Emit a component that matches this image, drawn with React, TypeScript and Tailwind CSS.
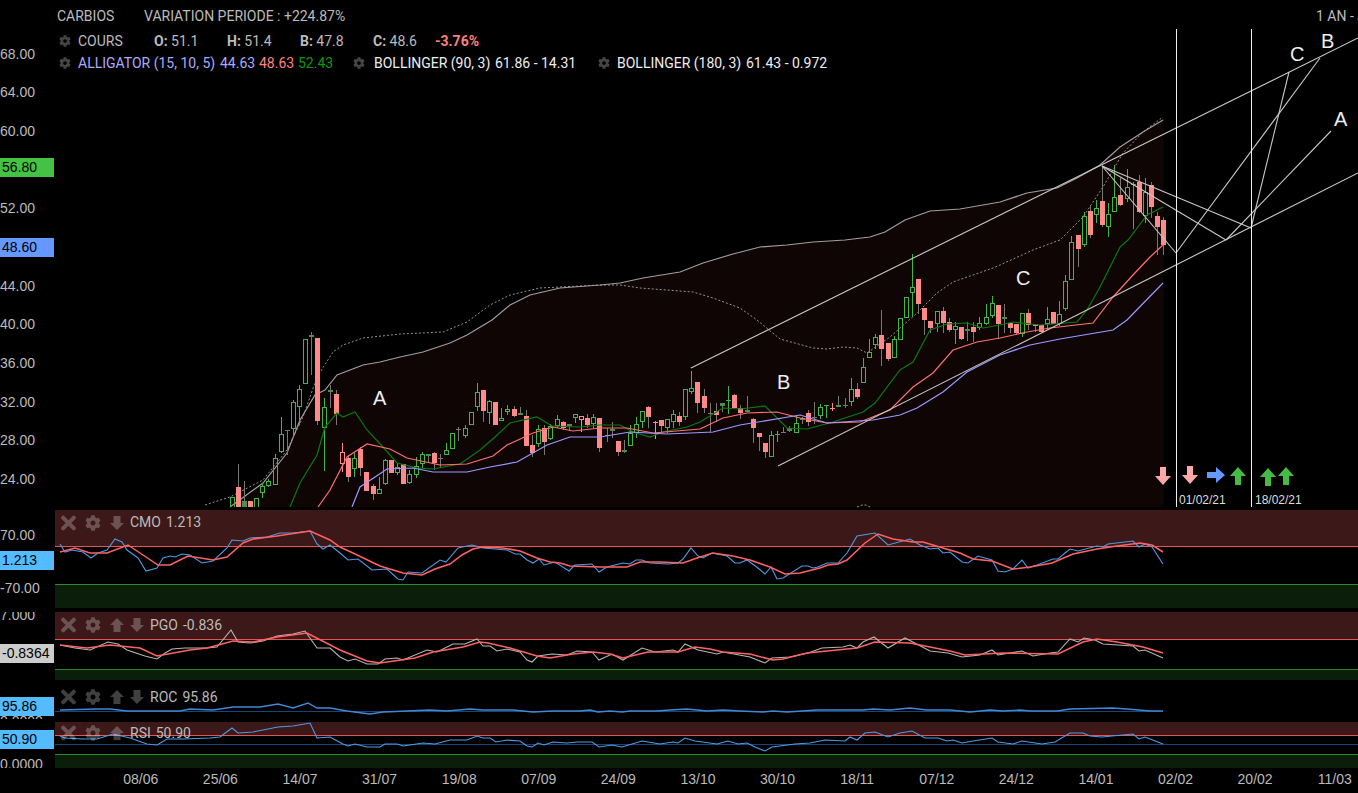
import type { ReactNode } from "react";
import { FaCog, FaTimes } from "react-icons/fa";

// x, high, body top, body bottom, low, kind
// u: hollow green, d: filled pink, p: hollow pink, g: small filled green
// x: grey cross, c: green cross, q: pink cross
type Candle = [number, number, number, number, number, string];

const candles: Candle[] = [
  [232, 497, 497, 510, 510, "u"], [238, 464, 487, 510, 510, "d"], [244, 481, 501, 510, 510, "g"], [250, 501, 501, 510, 510, "d"],
  [256, 498, 498, 510, 510, "u"], [262, 483, 486, 492, 498, "u"], [268, 479, 481, 485, 487, "u"], [275, 454, 458, 484, 485, "u"],
  [281, 417, 434, 451, 453, "u"], [287, 430, 430, 431, 455, "x"], [293, 400, 402, 428, 437, "u"], [299, 385, 389, 406, 425, "u"],
  [305, 339, 339, 383, 383, "u"], [311, 332, 335, 337, 375, "g"], [317, 338, 338, 421, 425, "d"], [324, 398, 407, 427, 471, "u"],
  [330, 385, 390, 392, 408, "g"], [336, 390, 394, 414, 425, "d"], [342, 443, 452, 463, 472, "p"], [348, 455, 458, 477, 482, "d"],
  [354, 453, 458, 468, 477, "u"], [360, 447, 449, 468, 476, "d"], [366, 472, 472, 491, 491, "d"], [373, 484, 486, 494, 500, "d"],
  [379, 477, 489, 493, 493, "u"], [385, 459, 460, 483, 485, "u"], [391, 460, 460, 473, 473, "d"], [397, 463, 467, 472, 475, "u"],
  [403, 464, 464, 484, 484, "d"], [409, 470, 474, 482, 484, "u"], [416, 457, 466, 474, 478, "u"], [422, 452, 454, 463, 468, "u"],
  [428, 454, 454, 456, 463, "g"], [434, 452, 453, 463, 470, "d"], [440, 454, 458, 458, 467, "x"], [446, 443, 450, 454, 454, "u"],
  [452, 433, 433, 448, 448, "u"], [458, 427, 429, 429, 441, "x"], [465, 425, 428, 435, 438, "u"], [471, 412, 412, 424, 424, "u"],
  [477, 383, 392, 406, 411, "u"], [483, 390, 390, 411, 422, "d"], [489, 400, 401, 412, 424, "u"], [495, 402, 402, 425, 425, "d"],
  [501, 408, 418, 420, 420, "u"], [507, 405, 409, 411, 415, "u"], [514, 406, 409, 416, 417, "d"], [520, 407, 413, 415, 415, "g"],
  [526, 410, 416, 446, 446, "d"], [532, 435, 445, 453, 457, "d"], [538, 425, 429, 443, 447, "u"], [544, 425, 428, 442, 455, "d"],
  [550, 424, 426, 438, 440, "u"], [557, 415, 419, 425, 428, "u"], [563, 421, 422, 428, 430, "d"], [569, 424, 424, 426, 430, "g"],
  [575, 414, 414, 417, 423, "u"], [581, 416, 416, 419, 432, "p"], [587, 414, 418, 425, 428, "d"], [593, 414, 417, 423, 428, "u"],
  [599, 418, 418, 448, 452, "d"], [607, 428, 435, 435, 442, "x"], [612, 422, 429, 431, 438, "g"], [618, 441, 441, 452, 456, "d"],
  [624, 440, 450, 452, 453, "g"], [630, 425, 433, 445, 445, "u"], [636, 417, 424, 432, 438, "u"], [642, 411, 411, 421, 428, "u"],
  [648, 406, 407, 417, 428, "d"], [655, 421, 422, 423, 439, "q"], [661, 420, 420, 426, 432, "d"], [667, 419, 419, 427, 433, "u"],
  [673, 410, 414, 421, 428, "u"], [679, 412, 416, 422, 426, "d"], [685, 389, 389, 416, 420, "u"], [691, 371, 388, 391, 394, "u"],
  [697, 382, 382, 403, 413, "d"], [704, 389, 396, 408, 413, "d"], [710, 403, 413, 414, 433, "x"], [716, 403, 411, 415, 422, "d"],
  [722, 403, 403, 406, 412, "g"], [728, 386, 400, 400, 414, "c"], [734, 394, 395, 408, 408, "d"], [740, 405, 408, 413, 419, "d"],
  [747, 396, 410, 412, 412, "g"], [753, 418, 419, 428, 443, "d"], [759, 433, 433, 437, 451, "d"], [765, 443, 443, 452, 458, "d"],
  [771, 431, 435, 456, 456, "u"], [777, 431, 434, 434, 442, "c"], [783, 427, 432, 432, 433, "x"], [789, 426, 428, 431, 432, "g"],
  [796, 416, 423, 432, 433, "u"], [802, 417, 418, 420, 424, "g"], [808, 410, 413, 422, 426, "d"], [814, 402, 417, 417, 424, "x"],
  [820, 404, 407, 415, 419, "u"], [826, 405, 405, 405, 418, "c"], [832, 403, 408, 408, 411, "q"], [838, 396, 405, 407, 407, "g"],
  [845, 398, 405, 405, 408, "x"], [851, 378, 389, 401, 406, "u"], [857, 383, 389, 397, 399, "d"], [863, 358, 367, 382, 383, "u"],
  [869, 339, 352, 357, 358, "u"], [875, 334, 337, 344, 349, "u"], [881, 310, 335, 349, 366, "d"], [888, 343, 343, 359, 361, "d"],
  [894, 336, 339, 357, 357, "u"], [900, 318, 318, 339, 339, "u"], [906, 297, 297, 317, 317, "u"], [912, 254, 287, 292, 317, "u"],
  [918, 279, 279, 304, 314, "d"], [924, 308, 308, 320, 335, "d"], [930, 321, 321, 328, 333, "d"], [937, 311, 311, 323, 332, "u"],
  [943, 307, 311, 323, 333, "d"], [949, 318, 322, 330, 332, "d"], [955, 322, 326, 329, 344, "u"], [961, 327, 327, 339, 340, "d"],
  [967, 322, 329, 331, 341, "g"], [973, 322, 327, 332, 342, "d"], [979, 317, 323, 327, 330, "u"], [986, 304, 317, 323, 325, "u"],
  [992, 296, 303, 315, 318, "u"], [998, 305, 305, 324, 339, "d"], [1004, 304, 317, 319, 333, "g"], [1010, 322, 323, 328, 333, "d"],
  [1016, 324, 324, 333, 335, "d"], [1022, 313, 313, 333, 337, "u"], [1028, 309, 313, 325, 330, "d"], [1035, 324, 324, 326, 332, "d"],
  [1041, 325, 325, 332, 332, "d"], [1047, 307, 319, 323, 330, "u"], [1053, 312, 312, 324, 324, "d"], [1059, 301, 314, 323, 326, "u"],
  [1065, 275, 281, 308, 311, "u"], [1071, 236, 242, 279, 279, "u"], [1078, 235, 235, 249, 267, "d"], [1084, 212, 216, 244, 247, "u"],
  [1090, 205, 211, 235, 238, "d"], [1096, 200, 208, 214, 223, "u"], [1102, 167, 201, 225, 227, "d"], [1108, 203, 214, 226, 237, "u"],
  [1114, 165, 197, 211, 212, "u"], [1120, 178, 195, 205, 206, "d"], [1127, 169, 187, 198, 202, "u"], [1133, 182, 184, 184, 229, "c"],
  [1139, 175, 182, 212, 213, "d"], [1145, 178, 192, 215, 223, "u"], [1151, 182, 185, 207, 218, "d"], [1157, 212, 216, 227, 255, "d"],
  [1163, 217, 220, 245, 255, "d"],
];

const bollingerUpper =
  "230,507 263,483 287,453 300,420 315,395 325,390 337,375 363,365 380,362 400,357 423,352 450,343 467,335 492,320 510,305 530,295 560,288 600,285 620,283 643,278 680,272 703,263 733,254 760,247 787,245 813,242 845,240 870,237 885,232 905,220 930,211 960,209 1000,202 1027,193 1057,188 1077,178 1100,165 1120,147 1143,132 1163,120";
const bollingerMid =
  "205,505 230,497 263,480 287,450 303,417 317,377 333,352 343,345 363,338 400,334 443,332 467,322 490,305 510,295 540,288 600,285 620,285 640,288 693,292 713,298 740,308 757,320 780,339 813,348 827,349 843,347 857,348 867,353 890,337 917,313 937,293 953,282 993,268 1000,265 1033,250 1060,240 1083,217 1103,187 1123,153 1143,132 1163,117";
const alligatorGreen =
  "290,507 300,483 317,455 325,427 337,413 343,417 355,412 367,430 383,447 397,463 417,468 433,469 460,464 480,450 495,437 510,423 537,417 552,426 580,427 600,425 620,425 633,432 650,437 663,432 687,427 700,422 723,408 740,409 765,406 787,428 807,429 833,422 863,412 875,403 900,370 913,362 930,330 947,324 967,323 983,328 1000,325 1013,322 1040,325 1077,322 1087,310 1100,287 1120,247 1128,240 1147,215 1163,207";
const alligatorRed =
  "318,507 330,490 347,457 367,444 390,449 407,458 440,465 467,464 493,456 507,445 533,433 553,427 573,431 600,428 627,428 653,433 700,429 723,418 747,413 777,412 800,418 827,423 860,422 890,410 913,387 933,373 953,350 977,342 1000,338 1027,332 1050,328 1093,323 1113,297 1133,275 1150,257 1163,245";
const alligatorBlue =
  "352,507 360,487 387,469 413,468 433,472 467,472 490,467 517,462 547,445 570,437 600,437 630,432 667,434 713,432 740,425 800,415 827,423 873,420 900,415 917,408 943,392 967,372 1000,355 1030,345 1060,339 1113,330 1127,320 1163,283";

const cmoBlue =
  "60,544 65,552 72,550 83,552 91,558 98,553 107,550 115,539 122,542 127,550 138,558 146,571 157,568 163,558 170,556 175,557 182,554 190,555 202,563 213,561 227,548 232,540 243,541 250,538 267,537 280,533 293,533 310,531 317,544 323,549 330,545 340,553 348,560 358,559 372,570 387,569 398,579 403,580 408,572 422,573 440,560 446,562 458,548 472,545 483,548 507,550 515,554 520,554 527,560 533,563 539,559 544,565 555,562 569,571 575,565 592,564 599,572 607,567 623,563 630,564 636,560 642,560 650,563 668,564 678,563 683,559 691,548 698,556 703,558 712,553 727,556 735,563 740,563 747,560 758,568 765,574 771,567 777,579 783,578 802,566 808,566 813,568 818,567 827,563 838,563 847,553 857,536 875,533 888,545 910,539 920,545 930,549 938,548 943,553 950,552 962,562 968,563 978,556 992,560 998,571 1005,572 1013,569 1022,560 1028,568 1037,565 1053,559 1058,559 1065,553 1070,549 1078,551 1097,546 1103,547 1108,544 1133,541 1139,547 1145,544 1152,547 1163,564";
const cmoRed =
  "60,552 75,548 90,553 107,553 128,545 143,555 158,565 170,565 188,556 213,560 227,557 243,543 253,539 277,536 310,531 330,540 340,547 353,553 380,566 403,573 422,575 435,569 450,564 462,555 473,549 483,547 503,548 520,551 537,558 550,562 560,563 570,566 600,567 627,567 640,562 660,562 683,563 697,558 713,553 733,556 750,560 770,567 785,574 800,573 820,568 828,565 838,564 847,560 865,543 878,534 893,539 913,542 923,542 943,548 960,553 973,559 992,561 1013,569 1030,567 1052,563 1073,554 1097,549 1117,546 1140,543 1152,545 1163,552";
const pgoGrey =
  "60,645 75,648 90,650 108,642 118,644 127,650 145,656 157,659 165,653 172,649 185,648 207,648 217,647 231,630 238,642 250,643 263,641 277,636 293,634 305,631 317,648 330,648 340,657 348,661 355,659 367,664 378,664 385,659 397,658 403,660 427,650 437,652 453,644 465,644 477,639 483,646 490,646 497,651 507,649 520,652 527,660 532,662 538,656 552,654 567,655 577,651 592,652 599,660 612,654 623,660 642,648 655,652 673,650 678,652 685,644 698,650 717,654 723,652 750,657 765,663 772,658 790,657 808,653 822,648 843,647 850,645 857,648 863,642 874,637 888,648 905,638 930,651 948,653 962,657 980,655 992,650 998,655 1010,653 1022,651 1033,656 1050,653 1058,652 1070,639 1078,642 1084,638 1095,640 1103,644 1133,646 1139,651 1145,650 1163,658";
const pgoRed =
  "60,645 87,648 110,645 140,648 157,656 190,650 207,648 233,641 253,642 277,637 307,633 340,650 367,661 380,663 415,658 433,652 463,647 480,642 488,643 510,648 537,656 550,658 573,654 593,652 610,654 623,658 648,652 663,652 678,652 695,647 710,649 723,652 750,654 773,660 783,659 807,653 857,648 875,642 910,643 950,651 965,655 1003,653 1058,654 1083,642 1097,639 1117,642 1143,647 1163,653";
const rocBlue =
  "60,710 97,709 110,709 127,711 180,711 190,709 213,710 233,707 260,707 278,704 293,708 308,703 317,708 330,708 347,711 370,714 383,712 407,711 430,710 447,711 470,709 483,710 513,710 533,712 553,711 580,711 590,710 598,712 610,711 622,712 630,711 657,711 670,710 687,709 707,711 723,710 740,711 763,712 773,711 787,712 817,710 863,710 873,709 890,710 910,708 927,710 950,710 970,712 990,710 1003,711 1020,710 1030,711 1057,711 1070,709 1113,708 1127,709 1150,711 1163,711";
const rsiBlue =
  "60,736 65,738 83,739 97,739 113,734 130,738 147,744 157,745 167,739 183,739 210,738 220,737 232,728 238,733 253,732 278,727 293,726 310,723 317,738 330,737 343,744 348,746 355,744 367,747 380,747 385,744 397,744 403,746 423,743 435,744 450,740 467,740 477,736 483,738 490,738 496,742 507,740 520,741 527,746 532,747 538,743 544,745 553,742 567,743 577,742 592,742 599,747 612,745 622,747 642,741 660,744 673,742 678,743 685,738 695,741 717,744 728,741 738,744 747,743 755,747 765,751 772,747 795,744 810,743 825,740 845,741 850,737 857,740 865,733 875,732 888,737 900,733 912,731 925,738 938,738 947,741 953,740 962,743 973,741 992,738 998,742 1013,744 1022,741 1042,744 1055,742 1070,733 1083,733 1090,736 1102,737 1133,734 1139,739 1145,737 1163,744";

const priceTicks = ["68.00", "64.00", "60.00", "56.80", "52.00", "48.60", "44.00", "40.00", "36.00", "32.00", "28.00", "24.00"];
const dates = ["08/06", "25/06", "14/07", "31/07", "19/08", "07/09", "24/09", "13/10", "30/10", "18/11", "07/12", "24/12", "14/01", "02/02", "20/02", "11/03"];

const axisFont = "font-[family-name:'Liberation_Sans',sans-serif] text-[14px] text-[#bbbbbb]";
const uiFont = "font-[family-name:Roboto,sans-serif] text-[14px]";

function CandleMark({ candle }: { candle: Candle }) {
  const [x, hi, top, bot, lo, kind] = candle;
  const cx = x + 0.5;
  const green = "#46b346";
  const pink = "#ff8a8a";
  const grey = "#777777";

  if (kind === "u" || kind === "p") {
    const color = kind === "u" ? green : pink;
    return (
      <g stroke={color} fill="none">
        <line x1={cx} x2={cx} y1={hi} y2={top} />
        <line x1={cx} x2={cx} y1={bot} y2={lo} />
        <rect x={x - 1.5} y={top + 0.5} width={4} height={bot - top} />
      </g>
    );
  }
  if (kind === "d") {
    return (
      <g>
        <line x1={cx} x2={cx} y1={hi} y2={lo} stroke={grey} />
        <rect x={x - 2} y={top} width={5} height={bot - top} fill={pink} />
      </g>
    );
  }
  if (kind === "g") {
    return (
      <g>
        <line x1={cx} x2={cx} y1={hi} y2={lo} stroke={grey} />
        <rect x={x - 2} y={top} width={5} height={Math.max(bot - top, 2)} fill="#4c8f4c" />
      </g>
    );
  }
  const color = kind === "c" ? green : kind === "q" ? pink : grey;
  return (
    <g stroke={color}>
      <line x1={cx} x2={cx} y1={hi} y2={lo} />
      <line x1={x - 2} x2={x + 3} y1={top + 0.5} y2={top + 0.5} />
    </g>
  );
}

function Signal({ x, y, dir, color }: { x: number; y: number; dir: "up" | "down" | "right"; color: string }) {
  if (dir === "right") {
    return <polygon points={`${x},${y + 5} ${x + 9},${y + 5} ${x + 9},${y} ${x + 18},${y + 8} ${x + 9},${y + 16} ${x + 9},${y + 11} ${x},${y + 11}`} fill={color} />;
  }
  if (dir === "up") {
    return <polygon points={`${x + 8},${y} ${x + 16},${y + 9} ${x + 11},${y + 9} ${x + 11},${y + 18} ${x + 5},${y + 18} ${x + 5},${y + 9} ${x},${y + 9}`} fill={color} />;
  }
  return <polygon points={`${x + 5},${y} ${x + 11},${y} ${x + 11},${y + 9} ${x + 16},${y + 9} ${x + 8},${y + 18} ${x},${y + 9} ${x + 5},${y + 9}`} fill={color} />;
}

function PriceChart() {
  const trend = "#c8c8c8";
  return (
    <svg viewBox="55 0 1303 510" className="block h-[510px] w-[1303px]">
      <polygon points={`${bollingerUpper} 1163.5,120 1163.5,507 230,507`} fill="#100505" />
      <polyline points={bollingerMid} fill="none" stroke="#9a9090" strokeWidth="1" strokeDasharray="2 2" />
      <polyline points="857,507 862,505 866,505 870,507" fill="none" stroke="#9a9090" strokeDasharray="2 2" />
      <polyline points={bollingerUpper} fill="none" stroke="#a39c9c" strokeWidth="1.2" />
      <g clipPath="url(#price-clip)">
        {candles.map((candle) => (
          <CandleMark key={candle[0]} candle={candle} />
        ))}
        <polyline points={alligatorGreen} fill="none" stroke="#0a7a0a" strokeWidth="1.2" />
        <polyline points={alligatorRed} fill="none" stroke="#ff6f6f" strokeWidth="1.2" />
        <polyline points={alligatorBlue} fill="none" stroke="#9a9aff" strokeWidth="1.2" />
      </g>
      <clipPath id="price-clip">
        <rect x="55" y="0" width="1303" height="507" />
      </clipPath>

      <g stroke={trend} strokeWidth="1.1" fill="none">
        <line x1="691" y1="368" x2="1358" y2="38" />
        <line x1="778" y1="466" x2="1358" y2="173" />
        <line x1="1102" y1="166" x2="1176" y2="253" />
        <line x1="1102" y1="166" x2="1226" y2="240" />
        <line x1="1102" y1="166" x2="1251" y2="228" />
        <line x1="1176" y1="253" x2="1320" y2="58" />
        <line x1="1226" y1="240" x2="1331" y2="131" />
        <line x1="1251" y1="228" x2="1289" y2="72" />
      </g>
      <line x1="1176.5" y1="29" x2="1176.5" y2="507" stroke="#eeeeee" />
      <line x1="1251.5" y1="29" x2="1251.5" y2="507" stroke="#eeeeee" />

      <g className="fill-[#eeeeee] font-[family-name:'Liberation_Sans',sans-serif] text-[20px]">
        <text x="373" y="405">A</text>
        <text x="777" y="389">B</text>
        <text x="1016" y="285">C</text>
        <text x="1290" y="61">C</text>
        <text x="1321" y="48">B</text>
        <text x="1334" y="126">A</text>
      </g>

      <Signal x={1155} y={467} dir="down" color="#ffa8a8" />
      <Signal x={1182} y={466} dir="down" color="#ffa8a8" />
      <Signal x={1207} y={467} dir="right" color="#6699ff" />
      <Signal x={1230} y={467} dir="up" color="#44bb44" />
      <Signal x={1260} y={468} dir="up" color="#44bb44" />
      <Signal x={1278} y={467} dir="up" color="#44bb44" />

      <g className="fill-[#dddddd] font-[family-name:'Liberation_Sans',sans-serif] text-[12px]">
        <text x="1179" y="504">01/02/21</text>
        <text x="1255" y="504">18/02/21</text>
      </g>
    </svg>
  );
}

function ChartLegend() {
  const gear = <FaCog size={12} className="shrink-0 text-[#444444]" />;
  return (
    <div className={`absolute inset-x-0 top-0 text-[#bbbbbb] ${uiFont}`}>
      <div className="flex h-[30px] items-center justify-between overflow-hidden pl-[57px] pt-[2px]">
        <div className="flex">
          <span className="w-[87px]">CARBIOS</span>
          <span>VARIATION PERIODE : +224.87%</span>
        </div>
        <span className="w-[42px] overflow-hidden whitespace-nowrap">1 AN - JOUR</span>
      </div>
      <div className="flex h-[22px] items-center pl-[59px]">
        {gear}
        <span className="ml-[7px] w-[76px]">COURS</span>
        <span className="w-[73px]"><b className="font-bold">O:</b> 51.1</span>
        <span className="w-[73px]"><b className="font-bold">H:</b> 51.4</span>
        <span className="w-[73px]"><b className="font-bold">B:</b> 47.8</span>
        <span className="w-[62px]"><b className="font-bold">C:</b> 48.6</span>
        <span className="font-bold text-[#ff7f7f]">-3.76%</span>
      </div>
      <div className="flex h-[22px] items-center pl-[59px]">
        {gear}
        <span className="ml-[7px] w-[142px] text-[#aaaaff]">ALLIGATOR (15, 10, 5)</span>
        <span className="w-[39px] text-[#aaaaff]">44.63</span>
        <span className="w-[39px] text-[#ff8080]">48.63</span>
        <span className="w-[55px] text-[#0c9a0c]">52.43</span>
        {gear}
        <span className="ml-[9px] w-[121px] text-[#eeeeee]">BOLLINGER (90, 3)</span>
        <span className="w-[103px] text-[#eeeeee]">61.86 - 14.31</span>
        {gear}
        <span className="ml-[7px] w-[129px] text-[#eeeeee]">BOLLINGER (180, 3)</span>
        <span className="text-[#eeeeee]">61.43 - 0.972</span>
      </div>
    </div>
  );
}

function PaneArrow({ dir }: { dir: "up" | "down" }) {
  return (
    <svg viewBox="0 0 14 14" className="h-[14px] w-[14px] fill-white/25">
      {dir === "up" ? (
        <polygon points="7,0 14,7 10.5,7 10.5,14 3.5,14 3.5,7 0,7" />
      ) : (
        <polygon points="3.5,0 10.5,0 10.5,7 14,7 7,14 0,7 3.5,7" />
      )}
    </svg>
  );
}

function PaneLegend({ label, value, arrows, height }: { label: string; value: string; arrows: ("up" | "down")[]; height: string }) {
  return (
    <div className={`absolute left-0 top-0 flex items-center pl-[6px] text-[#bbbbbb] ${height} ${uiFont}`}>
      <FaTimes size={22} className="w-[15px] text-white/25" />
      <FaCog size={16} className="ml-[9px] text-white/25" />
      <div className="ml-[9px] flex gap-[6px]">
        {arrows.map((dir) => (
          <PaneArrow key={dir} dir={dir} />
        ))}
      </div>
      <span className="ml-[6px] whitespace-nowrap">{label}</span>
      <span className="ml-[5px] whitespace-nowrap">{value}</span>
    </div>
  );
}

function Pane({ top, height, heightClass, axis, bands, legend, children }: {
  top: number;
  height: number;
  heightClass: string;
  axis: ReactNode;
  bands: ReactNode;
  legend: ReactNode;
  children: ReactNode;
}) {
  return (
    <div className={`flex ${heightClass}`}>
      <div className={`w-[55px] shrink-0 overflow-hidden ${axisFont}`}>{axis}</div>
      <div className="relative flex min-w-0 flex-1 flex-col overflow-hidden">
        {bands}
        <svg viewBox={`55 ${top} 1303 ${height}`} className="absolute left-0 top-0 h-full w-full">
          {children}
        </svg>
        {legend}
      </div>
    </div>
  );
}

function AxisTag({ value, color, className = "" }: { value: string; color: string; className?: string }) {
  return (
    <div className={`relative z-10 flex h-[19px] w-[54px] items-center pl-[2px] text-black ${color} ${className}`}>{value}</div>
  );
}

export default function App() {
  const upperBand = "shrink-0 border-b border-[#e05555] bg-[#3c1818]";
  const lowerBand = "flex-1 border-t border-[#2a8a2a] bg-[#0a1e0a]";

  return (
    <div className="h-[793px] w-[1358px] overflow-hidden bg-black">
      <div className="relative flex h-[510px]">
        <div className={`w-[55px] shrink-0 pt-[35px] ${axisFont}`}>
          {priceTicks.map((tick) => (
            <div key={tick} className="flex h-[38.67px] items-center">
              {tick === "56.80" && <AxisTag value={tick} color="bg-[#44c244]" className="-mt-[5px]" />}
              {tick === "48.60" && <AxisTag value={tick} color="bg-[#6699ff]" />}
              {tick !== "56.80" && tick !== "48.60" && <span>{tick}</span>}
            </div>
          ))}
        </div>
        <PriceChart />
        <ChartLegend />
      </div>

      <Pane
        top={510}
        height={98}
        heightClass="h-[98px]"
        axis={
          <>
            <div className="mt-[15px] flex h-5 items-center">70.00</div>
            <AxisTag value="1.213" color="bg-[#55bbff]" className="mt-[6px]" />
            <div className="mt-[8px] flex h-5 items-center">-70.00</div>
          </>
        }
        bands={
          <>
            <div className={`h-[37px] ${upperBand}`} />
            <div className="h-[37px] shrink-0" />
            <div className={lowerBand} />
          </>
        }
        legend={<PaneLegend label="CMO" value="1.213" arrows={["down"]} height="h-[25px]" />}
      >
        <polyline points={cmoBlue} fill="none" stroke="#4d9be6" strokeWidth="1.1" />
        <polyline points={cmoRed} fill="none" stroke="#ff6262" strokeWidth="1.5" />
      </Pane>

      <div className="h-[4px]" />

      <Pane
        top={612}
        height={68}
        heightClass="h-[68px]"
        axis={
          <>
            <div className="-mt-[7px] flex h-5 items-center">7.000</div>
            <AxisTag value="-0.8364" color="bg-[#cccccc]" className="mt-[19px]" />
          </>
        }
        bands={
          <>
            <div className={`h-[28px] ${upperBand}`} />
            <div className="h-[29px] shrink-0" />
            <div className={lowerBand} />
          </>
        }
        legend={<PaneLegend label="PGO" value="-0.836" arrows={["up", "down"]} height="h-[26px]" />}
      >
        <polyline points={pgoGrey} fill="none" stroke="#b5b5b5" strokeWidth="1.1" />
        <polyline points={pgoRed} fill="none" stroke="#ff6262" strokeWidth="1.5" />
      </Pane>

      <Pane
        top={680}
        height={39}
        heightClass="h-[39px]"
        axis={
          <>
            <AxisTag value="95.86" color="bg-[#55bbff]" className="mt-[17px]" />
            <div className="-mt-[5px] flex h-5 items-center">0.0000</div>
          </>
        }
        bands={null}
        legend={<PaneLegend label="ROC" value="95.86" arrows={["up", "down"]} height="h-[34px]" />}
      >
        <line x1="55" x2="1163" y1="711.5" y2="711.5" stroke="#17457a" />
        <polyline points={rocBlue} fill="none" stroke="#3f88d6" strokeWidth="1.4" />
      </Pane>

      <div className="h-[3px]" />

      <Pane
        top={722}
        height={46}
        heightClass="h-[46px]"
        axis={
          <>
            <AxisTag value="50.90" color="bg-[#55bbff]" className="mt-[8px]" />
            <div className="mt-[5px] flex h-5 items-center">0.0000</div>
          </>
        }
        bands={
          <>
            <div className={`h-[14px] ${upperBand}`} />
            <div className="h-[18px] shrink-0" />
            <div className={lowerBand} />
          </>
        }
        legend={<PaneLegend label="RSI" value="50.90" arrows={["up"]} height="h-[22px]" />}
      >
        <line x1="55" x2="1358" y1="744.5" y2="744.5" stroke="#17457a" />
        <polyline points={rsiBlue} fill="none" stroke="#4d9be6" strokeWidth="1.1" />
      </Pane>

      <div className={`flex h-[25px] items-center pb-[3px] pl-[101px] ${axisFont}`}>
        {dates.map((date) => (
          <div key={date} className="w-[79.6px] shrink-0 text-center">{date}</div>
        ))}
      </div>
    </div>
  );
}
